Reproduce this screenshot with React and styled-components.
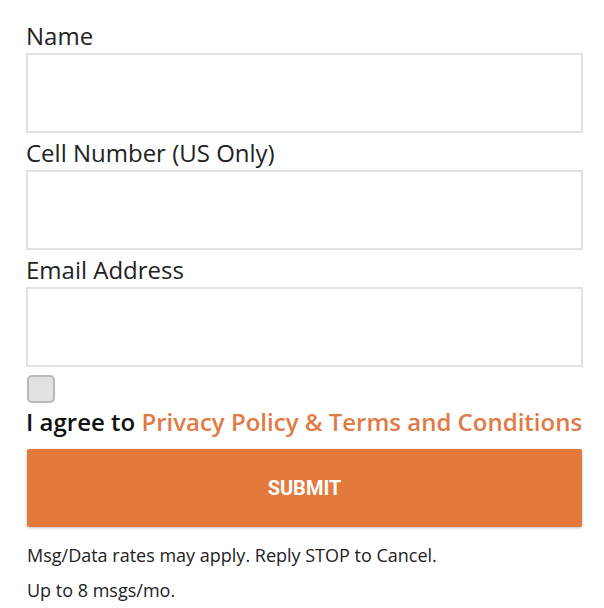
import styled, { createGlobalStyle } from "styled-components"

const GlobalStyle = createGlobalStyle`
  body {
    margin: 0;
    background: #ffffff;
    font-family: "Open Sans", "Liberation Sans", sans-serif;
    color: #222222;
  }
`

const fields = ["Name", "Cell Number (US Only)", "Email Address"]

const App = () => {
  return (
    <>
      <GlobalStyle />
      <Form onSubmit={(e) => e.preventDefault()}>
        {fields.map((f) => (
          <Field key={f}>
            <Label>{f}</Label>
            <Input type="text" />
          </Field>
        ))}
        <Check type="checkbox" />
        <Agree>
          I agree to <a href="#">Privacy Policy &amp; Terms and Conditions</a>
        </Agree>
        <Submit type="submit">SUBMIT</Submit>
        <Note>Msg/Data rates may apply. Reply STOP to Cancel.</Note>
        <Note>Up to 8 msgs/mo.</Note>
      </Form>
    </>
  )
}

export default App

const Form = styled.form`
  display: flex;
  flex-direction: column;
  padding: 20px 21px 0 26px;
`

const Field = styled.div`
  display: flex;
  flex-direction: column;
`

const Label = styled.label`
  font-size: 24px;
  line-height: 32px;
  margin-bottom: 1px;
  color: #222;
`

const Input = styled.input`
  box-sizing: border-box;
  height: 80px;
  margin: 0 0 4px;
  border: 2px solid #e2e2e2;
  background: #fff;
  outline: none;
`

const Check = styled.input`
  appearance: none;
  box-sizing: border-box;
  width: 28px;
  height: 28px;
  margin: 4px 0 3px 1px;
  border: 2px solid #b8b8b8;
  border-radius: 5px;
  background: #e2e2e2;
`

const Agree = styled.p`
  margin: 0;
  font-size: 24px;
  line-height: 32px;
  font-weight: 600;
  color: #111;

  a {
    color: #e27a45;
    text-decoration: none;
  }
`

const Submit = styled.button`
  margin: 11px 1px 0 1px;
  height: 78px;
  border: none;
  border-radius: 2px;
  background: #e4793c;
  color: #fff;
  font-family: Roboto, "Liberation Sans", sans-serif;
  font-weight: 700;
  font-size: 20px;
  box-shadow: 0 1px 3px rgba(0, 0, 0, 0.25);
  cursor: pointer;
`

const Note = styled.p`
  margin: 16px 0 0 1px;
  font-size: 18px;
  line-height: 24px;
  color: #222;

  & + & {
    margin-top: 11px;
  }
`
